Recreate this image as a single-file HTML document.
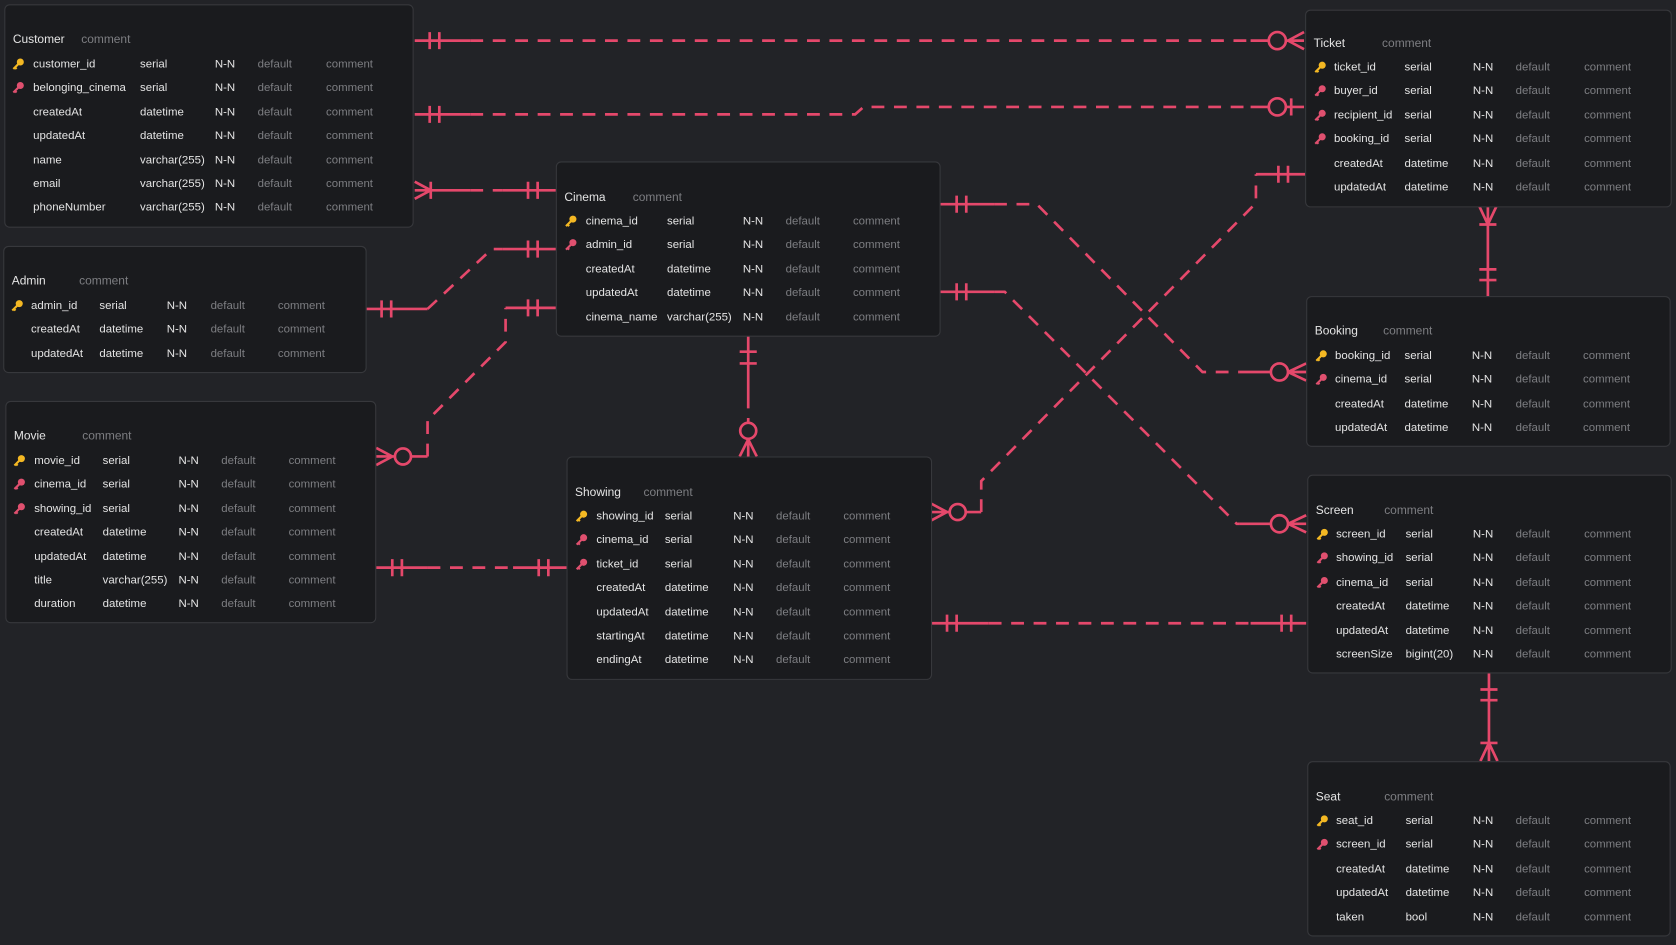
<!DOCTYPE html>
<html><head><meta charset="utf-8"><style>
html,body{margin:0;padding:0;background:#222327;width:1676px;height:945px;overflow:hidden}
#w{position:absolute;left:0;top:0;width:1568px;height:884px;transform:scale(1.06888,1.06900);transform-origin:0 0;font-family:"Liberation Sans",sans-serif}
.t{position:absolute;background:#1a1b1e;border:1px solid #37383c;border-radius:5px;box-sizing:border-box}
.r{position:absolute;left:0;right:0;height:16px;line-height:16px;font-size:10.7px;color:#e4e4e4;white-space:nowrap}
.r span{position:absolute;top:0}
.g{color:#7d7e82}
.h{font-size:11.2px}
.k{position:absolute;top:2px;width:12px;height:12px}
svg.l{position:absolute;left:0;top:0}
</style></head><body><div id="w">
<svg class="l" width="1568" height="884" fill="none" stroke="#e5486b" stroke-width="2.5">
<g>
<path d="M388 38H440M402 30V46M411 30V46M1170 38H1187M1203 38H1220M1205 38L1220 30M1205 38L1220 46"/>
<circle cx="1195" cy="38" r="8"/>
<path d="M388 107H440M402 99V115M411 99V115M1170 100H1187M1203 100H1220M1208 92V108"/>
<circle cx="1195" cy="100" r="8"/>
<path d="M388 178H440M388 170L403 178L388 186M403 170V186M470 178H520M494 170V186M503 170V186"/>
<path d="M343 289H400M357 281V297M366 281V297M470 233H520M494 225V241M503 225V241"/>
<path d="M352 419L367 427L352 435M352 427H369M385 427H400M473 288H520M494 280V296M503 280V296"/>
<circle cx="377" cy="427" r="7.5"/>
<path d="M352 531H400M367 523V539M376 523V539M480 531H530M504 523V539M513 523V539"/>
<path d="M700 314V370M692 329H708M692 340H708M700 411V427M700 411L692 427M700 411L708 427"/>
<circle cx="700" cy="403" r="7.5"/>
<path d="M879 191H930M895 183V199M904 183V199M1160 348H1189M1205 348H1222M1205 348L1222 340M1205 348L1222 356"/>
<circle cx="1197" cy="348" r="8"/>
<path d="M879 273H930M895 265V281M904 265V281M1160 490H1189M1205 490H1222M1205 490L1222 482M1205 490L1222 498"/>
<circle cx="1197" cy="490" r="8"/>
<path d="M871 471L886 479L871 487M871 479H888M904 479H918M1175 163H1221M1196 155V171M1205 155V171"/>
<circle cx="896" cy="479" r="7.5"/>
<path d="M871 583H925M886 575V591M895 575V591M1170 583H1222M1199 575V591M1208 575V591"/>
<path d="M1392 193V277M1392 210L1384 193M1392 210L1400 193M1384 210H1400M1384 252H1400M1384 262H1400"/>
<path d="M1393 629V712M1385 645H1401M1385 655H1401M1393 695L1385 712M1393 695L1401 712M1385 695H1401"/>
</g>
<g stroke-dasharray="12 9">
<path d="M440 38H1170"/>
<path d="M440 107H800L808 100H1170"/>
<path d="M440 178H470"/>
<path d="M400 289L460 233H470"/>
<path d="M400 427V393L473 320V288"/>
<path d="M400 531H480"/>
<path d="M700 370V395"/>
<path d="M930 191H970L1125 348H1160"/>
<path d="M930 273H940L1157 490H1160"/>
<path d="M918 479V450L1175 190V163"/>
<path d="M925 583H1170"/>
</g>
</svg>

<div class="t" style="left:4px;top:4px;width:383px;height:209px">
<div class="r h" style="top:24px"><span style="left:7px">Customer</span><span class="g" style="left:71px">comment</span></div>
<div class="r" style="top:47px"><svg class="k" style="left:6px" viewBox="0 0 12 12"><circle cx="8" cy="4" r="3.3" fill="#f4b823"/><path d="M7 5L1.5 10.5M3 9L4.5 10.5" stroke="#f4b823" stroke-width="2" fill="none"/></svg><span style="left:26px">customer_id</span><span style="left:126px">serial</span><span style="left:196px">N-N</span><span class="g" style="left:236px">default</span><span class="g" style="left:300px">comment</span></div>
<div class="r" style="top:69.4px"><svg class="k" style="left:6px" viewBox="0 0 12 12"><circle cx="8" cy="4" r="3.3" fill="#e0506f"/><path d="M7 5L1.5 10.5M3 9L4.5 10.5" stroke="#e0506f" stroke-width="2" fill="none"/></svg><span style="left:26px">belonging_cinema</span><span style="left:126px">serial</span><span style="left:196px">N-N</span><span class="g" style="left:236px">default</span><span class="g" style="left:300px">comment</span></div>
<div class="r" style="top:91.8px"><span style="left:26px">createdAt</span><span style="left:126px">datetime</span><span style="left:196px">N-N</span><span class="g" style="left:236px">default</span><span class="g" style="left:300px">comment</span></div>
<div class="r" style="top:114.2px"><span style="left:26px">updatedAt</span><span style="left:126px">datetime</span><span style="left:196px">N-N</span><span class="g" style="left:236px">default</span><span class="g" style="left:300px">comment</span></div>
<div class="r" style="top:136.6px"><span style="left:26px">name</span><span style="left:126px">varchar(255)</span><span style="left:196px">N-N</span><span class="g" style="left:236px">default</span><span class="g" style="left:300px">comment</span></div>
<div class="r" style="top:159px"><span style="left:26px">email</span><span style="left:126px">varchar(255)</span><span style="left:196px">N-N</span><span class="g" style="left:236px">default</span><span class="g" style="left:300px">comment</span></div>
<div class="r" style="top:181.4px"><span style="left:26px">phoneNumber</span><span style="left:126px">varchar(255)</span><span style="left:196px">N-N</span><span class="g" style="left:236px">default</span><span class="g" style="left:300px">comment</span></div>
</div>

<div class="t" style="left:3px;top:230px;width:340px;height:119px">
<div class="r h" style="top:24px"><span style="left:7px">Admin</span><span class="g" style="left:70px">comment</span></div>
<div class="r" style="top:47px"><svg class="k" style="left:6px" viewBox="0 0 12 12"><circle cx="8" cy="4" r="3.3" fill="#f4b823"/><path d="M7 5L1.5 10.5M3 9L4.5 10.5" stroke="#f4b823" stroke-width="2" fill="none"/></svg><span style="left:25px">admin_id</span><span style="left:89px">serial</span><span style="left:152px">N-N</span><span class="g" style="left:193px">default</span><span class="g" style="left:256px">comment</span></div>
<div class="r" style="top:69.4px"><span style="left:25px">createdAt</span><span style="left:89px">datetime</span><span style="left:152px">N-N</span><span class="g" style="left:193px">default</span><span class="g" style="left:256px">comment</span></div>
<div class="r" style="top:91.8px"><span style="left:25px">updatedAt</span><span style="left:89px">datetime</span><span style="left:152px">N-N</span><span class="g" style="left:193px">default</span><span class="g" style="left:256px">comment</span></div>
</div>

<div class="t" style="left:5px;top:375px;width:347px;height:208px">
<div class="r h" style="top:24px"><span style="left:7px">Movie</span><span class="g" style="left:71px">comment</span></div>
<div class="r" style="top:47px"><svg class="k" style="left:6px" viewBox="0 0 12 12"><circle cx="8" cy="4" r="3.3" fill="#f4b823"/><path d="M7 5L1.5 10.5M3 9L4.5 10.5" stroke="#f4b823" stroke-width="2" fill="none"/></svg><span style="left:26px">movie_id</span><span style="left:90px">serial</span><span style="left:161px">N-N</span><span class="g" style="left:201px">default</span><span class="g" style="left:264px">comment</span></div>
<div class="r" style="top:69.4px"><svg class="k" style="left:6px" viewBox="0 0 12 12"><circle cx="8" cy="4" r="3.3" fill="#e0506f"/><path d="M7 5L1.5 10.5M3 9L4.5 10.5" stroke="#e0506f" stroke-width="2" fill="none"/></svg><span style="left:26px">cinema_id</span><span style="left:90px">serial</span><span style="left:161px">N-N</span><span class="g" style="left:201px">default</span><span class="g" style="left:264px">comment</span></div>
<div class="r" style="top:91.8px"><svg class="k" style="left:6px" viewBox="0 0 12 12"><circle cx="8" cy="4" r="3.3" fill="#e0506f"/><path d="M7 5L1.5 10.5M3 9L4.5 10.5" stroke="#e0506f" stroke-width="2" fill="none"/></svg><span style="left:26px">showing_id</span><span style="left:90px">serial</span><span style="left:161px">N-N</span><span class="g" style="left:201px">default</span><span class="g" style="left:264px">comment</span></div>
<div class="r" style="top:114.2px"><span style="left:26px">createdAt</span><span style="left:90px">datetime</span><span style="left:161px">N-N</span><span class="g" style="left:201px">default</span><span class="g" style="left:264px">comment</span></div>
<div class="r" style="top:136.6px"><span style="left:26px">updatedAt</span><span style="left:90px">datetime</span><span style="left:161px">N-N</span><span class="g" style="left:201px">default</span><span class="g" style="left:264px">comment</span></div>
<div class="r" style="top:159px"><span style="left:26px">title</span><span style="left:90px">varchar(255)</span><span style="left:161px">N-N</span><span class="g" style="left:201px">default</span><span class="g" style="left:264px">comment</span></div>
<div class="r" style="top:181.4px"><span style="left:26px">duration</span><span style="left:90px">datetime</span><span style="left:161px">N-N</span><span class="g" style="left:201px">default</span><span class="g" style="left:264px">comment</span></div>
</div>

<div class="t" style="left:520px;top:151px;width:360px;height:164px">
<div class="r h" style="top:25px"><span style="left:7px">Cinema</span><span class="g" style="left:71px">comment</span></div>
<div class="r" style="top:47px"><svg class="k" style="left:7px" viewBox="0 0 12 12"><circle cx="8" cy="4" r="3.3" fill="#f4b823"/><path d="M7 5L1.5 10.5M3 9L4.5 10.5" stroke="#f4b823" stroke-width="2" fill="none"/></svg><span style="left:27px">cinema_id</span><span style="left:103px">serial</span><span style="left:174px">N-N</span><span class="g" style="left:214px">default</span><span class="g" style="left:277px">comment</span></div>
<div class="r" style="top:69.4px"><svg class="k" style="left:7px" viewBox="0 0 12 12"><circle cx="8" cy="4" r="3.3" fill="#e0506f"/><path d="M7 5L1.5 10.5M3 9L4.5 10.5" stroke="#e0506f" stroke-width="2" fill="none"/></svg><span style="left:27px">admin_id</span><span style="left:103px">serial</span><span style="left:174px">N-N</span><span class="g" style="left:214px">default</span><span class="g" style="left:277px">comment</span></div>
<div class="r" style="top:91.8px"><span style="left:27px">createdAt</span><span style="left:103px">datetime</span><span style="left:174px">N-N</span><span class="g" style="left:214px">default</span><span class="g" style="left:277px">comment</span></div>
<div class="r" style="top:114.2px"><span style="left:27px">updatedAt</span><span style="left:103px">datetime</span><span style="left:174px">N-N</span><span class="g" style="left:214px">default</span><span class="g" style="left:277px">comment</span></div>
<div class="r" style="top:136.6px"><span style="left:27px">cinema_name</span><span style="left:103px">varchar(255)</span><span style="left:174px">N-N</span><span class="g" style="left:214px">default</span><span class="g" style="left:277px">comment</span></div>
</div>

<div class="t" style="left:530px;top:427px;width:342px;height:209px">
<div class="r h" style="top:25px"><span style="left:7px">Showing</span><span class="g" style="left:71px">comment</span></div>
<div class="r" style="top:47px"><svg class="k" style="left:7px" viewBox="0 0 12 12"><circle cx="8" cy="4" r="3.3" fill="#f4b823"/><path d="M7 5L1.5 10.5M3 9L4.5 10.5" stroke="#f4b823" stroke-width="2" fill="none"/></svg><span style="left:27px">showing_id</span><span style="left:91px">serial</span><span style="left:155px">N-N</span><span class="g" style="left:195px">default</span><span class="g" style="left:258px">comment</span></div>
<div class="r" style="top:69.4px"><svg class="k" style="left:7px" viewBox="0 0 12 12"><circle cx="8" cy="4" r="3.3" fill="#e0506f"/><path d="M7 5L1.5 10.5M3 9L4.5 10.5" stroke="#e0506f" stroke-width="2" fill="none"/></svg><span style="left:27px">cinema_id</span><span style="left:91px">serial</span><span style="left:155px">N-N</span><span class="g" style="left:195px">default</span><span class="g" style="left:258px">comment</span></div>
<div class="r" style="top:91.8px"><svg class="k" style="left:7px" viewBox="0 0 12 12"><circle cx="8" cy="4" r="3.3" fill="#e0506f"/><path d="M7 5L1.5 10.5M3 9L4.5 10.5" stroke="#e0506f" stroke-width="2" fill="none"/></svg><span style="left:27px">ticket_id</span><span style="left:91px">serial</span><span style="left:155px">N-N</span><span class="g" style="left:195px">default</span><span class="g" style="left:258px">comment</span></div>
<div class="r" style="top:114.2px"><span style="left:27px">createdAt</span><span style="left:91px">datetime</span><span style="left:155px">N-N</span><span class="g" style="left:195px">default</span><span class="g" style="left:258px">comment</span></div>
<div class="r" style="top:136.6px"><span style="left:27px">updatedAt</span><span style="left:91px">datetime</span><span style="left:155px">N-N</span><span class="g" style="left:195px">default</span><span class="g" style="left:258px">comment</span></div>
<div class="r" style="top:159px"><span style="left:27px">startingAt</span><span style="left:91px">datetime</span><span style="left:155px">N-N</span><span class="g" style="left:195px">default</span><span class="g" style="left:258px">comment</span></div>
<div class="r" style="top:181.4px"><span style="left:27px">endingAt</span><span style="left:91px">datetime</span><span style="left:155px">N-N</span><span class="g" style="left:195px">default</span><span class="g" style="left:258px">comment</span></div>
</div>

<div class="t" style="left:1221px;top:9px;width:343px;height:185px">
<div class="r h" style="top:23px"><span style="left:7px">Ticket</span><span class="g" style="left:71px">comment</span></div>
<div class="r" style="top:45px"><svg class="k" style="left:7px" viewBox="0 0 12 12"><circle cx="8" cy="4" r="3.3" fill="#f4b823"/><path d="M7 5L1.5 10.5M3 9L4.5 10.5" stroke="#f4b823" stroke-width="2" fill="none"/></svg><span style="left:26px">ticket_id</span><span style="left:92px">serial</span><span style="left:156px">N-N</span><span class="g" style="left:196px">default</span><span class="g" style="left:260px">comment</span></div>
<div class="r" style="top:67.4px"><svg class="k" style="left:7px" viewBox="0 0 12 12"><circle cx="8" cy="4" r="3.3" fill="#e0506f"/><path d="M7 5L1.5 10.5M3 9L4.5 10.5" stroke="#e0506f" stroke-width="2" fill="none"/></svg><span style="left:26px">buyer_id</span><span style="left:92px">serial</span><span style="left:156px">N-N</span><span class="g" style="left:196px">default</span><span class="g" style="left:260px">comment</span></div>
<div class="r" style="top:89.8px"><svg class="k" style="left:7px" viewBox="0 0 12 12"><circle cx="8" cy="4" r="3.3" fill="#e0506f"/><path d="M7 5L1.5 10.5M3 9L4.5 10.5" stroke="#e0506f" stroke-width="2" fill="none"/></svg><span style="left:26px">recipient_id</span><span style="left:92px">serial</span><span style="left:156px">N-N</span><span class="g" style="left:196px">default</span><span class="g" style="left:260px">comment</span></div>
<div class="r" style="top:112.2px"><svg class="k" style="left:7px" viewBox="0 0 12 12"><circle cx="8" cy="4" r="3.3" fill="#e0506f"/><path d="M7 5L1.5 10.5M3 9L4.5 10.5" stroke="#e0506f" stroke-width="2" fill="none"/></svg><span style="left:26px">booking_id</span><span style="left:92px">serial</span><span style="left:156px">N-N</span><span class="g" style="left:196px">default</span><span class="g" style="left:260px">comment</span></div>
<div class="r" style="top:134.6px"><span style="left:26px">createdAt</span><span style="left:92px">datetime</span><span style="left:156px">N-N</span><span class="g" style="left:196px">default</span><span class="g" style="left:260px">comment</span></div>
<div class="r" style="top:157px"><span style="left:26px">updatedAt</span><span style="left:92px">datetime</span><span style="left:156px">N-N</span><span class="g" style="left:196px">default</span><span class="g" style="left:260px">comment</span></div>
</div>

<div class="t" style="left:1222px;top:277px;width:341px;height:141px">
<div class="r h" style="top:24px"><span style="left:7px">Booking</span><span class="g" style="left:71px">comment</span></div>
<div class="r" style="top:47px"><svg class="k" style="left:7px" viewBox="0 0 12 12"><circle cx="8" cy="4" r="3.3" fill="#f4b823"/><path d="M7 5L1.5 10.5M3 9L4.5 10.5" stroke="#f4b823" stroke-width="2" fill="none"/></svg><span style="left:26px">booking_id</span><span style="left:91px">serial</span><span style="left:154px">N-N</span><span class="g" style="left:195px">default</span><span class="g" style="left:258px">comment</span></div>
<div class="r" style="top:69.4px"><svg class="k" style="left:7px" viewBox="0 0 12 12"><circle cx="8" cy="4" r="3.3" fill="#e0506f"/><path d="M7 5L1.5 10.5M3 9L4.5 10.5" stroke="#e0506f" stroke-width="2" fill="none"/></svg><span style="left:26px">cinema_id</span><span style="left:91px">serial</span><span style="left:154px">N-N</span><span class="g" style="left:195px">default</span><span class="g" style="left:258px">comment</span></div>
<div class="r" style="top:91.8px"><span style="left:26px">createdAt</span><span style="left:91px">datetime</span><span style="left:154px">N-N</span><span class="g" style="left:195px">default</span><span class="g" style="left:258px">comment</span></div>
<div class="r" style="top:114.2px"><span style="left:26px">updatedAt</span><span style="left:91px">datetime</span><span style="left:154px">N-N</span><span class="g" style="left:195px">default</span><span class="g" style="left:258px">comment</span></div>
</div>

<div class="t" style="left:1223px;top:444px;width:341px;height:186px">
<div class="r h" style="top:25px"><span style="left:7px">Screen</span><span class="g" style="left:71px">comment</span></div>
<div class="r" style="top:47px"><svg class="k" style="left:7px" viewBox="0 0 12 12"><circle cx="8" cy="4" r="3.3" fill="#f4b823"/><path d="M7 5L1.5 10.5M3 9L4.5 10.5" stroke="#f4b823" stroke-width="2" fill="none"/></svg><span style="left:26px">screen_id</span><span style="left:91px">serial</span><span style="left:154px">N-N</span><span class="g" style="left:194px">default</span><span class="g" style="left:258px">comment</span></div>
<div class="r" style="top:69.4px"><svg class="k" style="left:7px" viewBox="0 0 12 12"><circle cx="8" cy="4" r="3.3" fill="#e0506f"/><path d="M7 5L1.5 10.5M3 9L4.5 10.5" stroke="#e0506f" stroke-width="2" fill="none"/></svg><span style="left:26px">showing_id</span><span style="left:91px">serial</span><span style="left:154px">N-N</span><span class="g" style="left:194px">default</span><span class="g" style="left:258px">comment</span></div>
<div class="r" style="top:91.8px"><svg class="k" style="left:7px" viewBox="0 0 12 12"><circle cx="8" cy="4" r="3.3" fill="#e0506f"/><path d="M7 5L1.5 10.5M3 9L4.5 10.5" stroke="#e0506f" stroke-width="2" fill="none"/></svg><span style="left:26px">cinema_id</span><span style="left:91px">serial</span><span style="left:154px">N-N</span><span class="g" style="left:194px">default</span><span class="g" style="left:258px">comment</span></div>
<div class="r" style="top:114.2px"><span style="left:26px">createdAt</span><span style="left:91px">datetime</span><span style="left:154px">N-N</span><span class="g" style="left:194px">default</span><span class="g" style="left:258px">comment</span></div>
<div class="r" style="top:136.6px"><span style="left:26px">updatedAt</span><span style="left:91px">datetime</span><span style="left:154px">N-N</span><span class="g" style="left:194px">default</span><span class="g" style="left:258px">comment</span></div>
<div class="r" style="top:159px"><span style="left:26px">screenSize</span><span style="left:91px">bigint(20)</span><span style="left:154px">N-N</span><span class="g" style="left:194px">default</span><span class="g" style="left:258px">comment</span></div>
</div>

<div class="t" style="left:1223px;top:712px;width:340px;height:164px">
<div class="r h" style="top:25px"><span style="left:7px">Seat</span><span class="g" style="left:71px">comment</span></div>
<div class="r" style="top:47px"><svg class="k" style="left:7px" viewBox="0 0 12 12"><circle cx="8" cy="4" r="3.3" fill="#f4b823"/><path d="M7 5L1.5 10.5M3 9L4.5 10.5" stroke="#f4b823" stroke-width="2" fill="none"/></svg><span style="left:26px">seat_id</span><span style="left:91px">serial</span><span style="left:154px">N-N</span><span class="g" style="left:194px">default</span><span class="g" style="left:258px">comment</span></div>
<div class="r" style="top:69.4px"><svg class="k" style="left:7px" viewBox="0 0 12 12"><circle cx="8" cy="4" r="3.3" fill="#e0506f"/><path d="M7 5L1.5 10.5M3 9L4.5 10.5" stroke="#e0506f" stroke-width="2" fill="none"/></svg><span style="left:26px">screen_id</span><span style="left:91px">serial</span><span style="left:154px">N-N</span><span class="g" style="left:194px">default</span><span class="g" style="left:258px">comment</span></div>
<div class="r" style="top:91.8px"><span style="left:26px">createdAt</span><span style="left:91px">datetime</span><span style="left:154px">N-N</span><span class="g" style="left:194px">default</span><span class="g" style="left:258px">comment</span></div>
<div class="r" style="top:114.2px"><span style="left:26px">updatedAt</span><span style="left:91px">datetime</span><span style="left:154px">N-N</span><span class="g" style="left:194px">default</span><span class="g" style="left:258px">comment</span></div>
<div class="r" style="top:136.6px"><span style="left:26px">taken</span><span style="left:91px">bool</span><span style="left:154px">N-N</span><span class="g" style="left:194px">default</span><span class="g" style="left:258px">comment</span></div>
</div>

</div></body></html>
